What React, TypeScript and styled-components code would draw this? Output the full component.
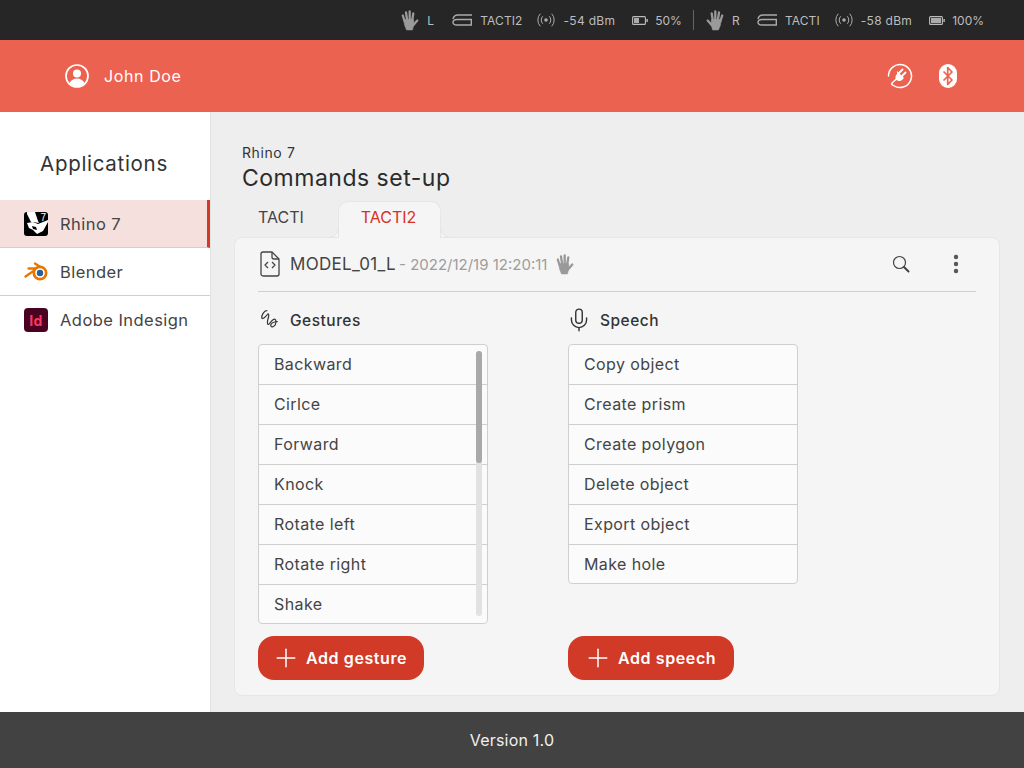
import styled, { createGlobalStyle } from 'styled-components';
import { EllipsisVertical, Mic, Plus } from 'lucide-react';

const gestures = ['Backward', 'Cirlce', 'Forward', 'Knock', 'Rotate left', 'Rotate right', 'Shake'];
const speech = ['Copy object', 'Create prism', 'Create polygon', 'Delete object', 'Export object', 'Make hole'];

const GlobalStyle = createGlobalStyle`
    html, body {
        margin: 0;
        padding: 0;
    }

    body {
        font-family: Inter, "Open Sans", "Liberation Sans", sans-serif;
        color: #333;
    }

    * {
        box-sizing: border-box;
    }
`;

function HandIcon({ color, mirrored }: { color: string; mirrored?: boolean }) {
    return (
        <svg width="18" height="21" viewBox="0 0 18 21" fill={color} stroke={color} style={mirrored ? { transform: 'scaleX(-1)' } : undefined}>
            <path d="M3 9.500h9.500l.5 4-1.500 6.500H5.500L3.500 15z" strokeWidth="0.500" />
            <path d="M3.800 12L1.800 5.500M6.200 10.500L5 2.500M8.700 10.500V1.500M11.200 10.500L12.300 3.500" strokeWidth="2.300" strokeLinecap="round" fill="none" />
            <path d="M12 15.500L16.300 10.500" strokeWidth="2.300" strokeLinecap="round" fill="none" />
        </svg>
    );
}

function DeviceIcon() {
    return (
        <svg width="20" height="12" viewBox="0 0 20 12" fill="none" stroke="#aaa" strokeWidth="1.400">
            <path d="M1 5C1.500 2.500 3.500 1 6 1h14" />
            <path d="M19.300 5.500H5C2.500 5.500 1 6.800 1 8.300S2.500 11 5 11h14.300z" />
        </svg>
    );
}

function SignalIcon() {
    return (
        <svg width="18" height="14" viewBox="0 0 18 14" fill="none" stroke="#aaa" strokeWidth="1" strokeLinecap="round">
            <circle cx="9" cy="7" r="1.800" fill="#aaa" stroke="none" />
            <path d="M5.500 3.500a5 5 0 0 0 0 7M12.500 3.500a5 5 0 0 1 0 7" />
            <path d="M3 1a9 9 0 0 0 0 12M15 1a9 9 0 0 1 0 12" />
        </svg>
    );
}

function BatteryIcon({ level }: { level: number }) {
    return (
        <svg width="16" height="9" viewBox="0 0 16 9" fill="none">
            <rect x="0.600" y="0.600" width="12.800" height="7.800" rx="1" stroke="#bbb" strokeWidth="1.100" />
            <rect x="2" y="2" width={10 * level} height="5" fill="#aaa" />
            <rect x="14.400" y="3" width="1.400" height="3" fill="#bbb" />
        </svg>
    );
}

function PlugIcon() {
    return (
        <svg width="26" height="26" viewBox="0 0 26 26" fill="none" stroke="#fff">
            <path d="M10 15.500L5.500 19.500C4 21 5 22 6.500 22.500A11.500 11.500 0 1 0 1.500 13" strokeWidth="1.500" strokeLinecap="round" />
            <path d="M10 8l7 7-1.500 1.500c-2 2-4.500 2-6 .5s-1.500-4 .5-6z" fill="#fff" stroke="none" />
            <path d="M12 10l3.500-3.500M15 13l3.500-3.500" strokeWidth="1.800" strokeLinecap="round" />
        </svg>
    );
}

function BluetoothIcon() {
    return (
        <svg width="18" height="24" viewBox="0 0 18 24" fill="none">
            <rect width="18" height="24" rx="9" fill="#fff" />
            <path d="M4.500 7.500L13 16l-4.300 4.500V3.500L13 8l-8.500 8.500" stroke="#ec6251" strokeWidth="1.700" strokeLinejoin="round" />
        </svg>
    );
}

function UserIcon() {
    return (
        <svg width="24" height="24" viewBox="0 0 24 24" fill="none">
            <circle cx="12" cy="12" r="11" stroke="#fff" strokeWidth="1.700" />
            <circle cx="12" cy="9.500" r="4" fill="#fff" />
            <path d="M4.500 19c1.500-3 4.500-4.500 7.500-4.500s6 1.500 7.500 4.500c-2 2.200-4.700 3.500-7.500 3.500S6.500 21.200 4.500 19z" fill="#fff" />
        </svg>
    );
}

function RhinoIcon() {
    return (
        <svg width="24" height="24" viewBox="0 0 24 24">
            <rect width="24" height="24" rx="3" fill="#000" />
            <path d="M3 0h8l3 9 1 2-6-1-2 0-4-8z" fill="#fff" />
            <path d="M3 11l6-1 5 2 10-4v2l-5 9-6 3-4-4-4-2z" fill="#fff" />
            <path d="M8 14l4 1 1 3-4-1z" fill="#000" />
            <text x="16.500" y="9" fontSize="10" fontFamily="Liberation Sans, sans-serif" fill="#fff">7</text>
        </svg>
    );
}

function BlenderIcon() {
    return (
        <svg width="24" height="20" viewBox="0 0 24 20" fill="none" stroke="#ea7600" strokeLinecap="round">
            <path d="M1.500 14.500L9.500 9M4.500 6.500H14M11 1.500L18 6" strokeWidth="2.300" />
            <circle cx="16" cy="11" r="6.200" fill="#fff" strokeWidth="2.700" />
            <circle cx="16" cy="11" r="3.200" fill="#24619c" stroke="none" />
        </svg>
    );
}

function FileCodeIcon() {
    return (
        <svg width="20" height="26" viewBox="0 0 20 26" fill="none" stroke="#444" strokeWidth="1.300" strokeLinejoin="round">
            <path d="M3 1h9l7 7v15a2 2 0 0 1-2 2H3a2 2 0 0 1-2-2V3a2 2 0 0 1 2-2z" />
            <path d="M12 1v5a2 2 0 0 0 2 2h5" />
            <path d="M8 11l-3 3 3 3M12 11l3 3-3 3" />
        </svg>
    );
}

function SearchIcon() {
    return (
        <svg width="18" height="18" viewBox="0 0 18 18" fill="none" stroke="#444">
            <circle cx="7.500" cy="7.500" r="6" strokeWidth="1.200" />
            <path d="M12 12l4.500 4.500" strokeWidth="2" strokeLinecap="round" />
        </svg>
    );
}

function GestureIcon() {
    return (
        <svg width="22" height="22" viewBox="-2 0 20 20" fill="none" stroke="#333" strokeWidth="1.100" strokeLinecap="round">
            <path d="M6 1.500C3.500 1.500 1 6 1.500 8c.5 2 3.500-1 5-3 1-1.300 1.700.2 1 2.500-.8 2.700-1.500 5.500-.5 6.500 1 .8 3-3.500 5-4.500 1.500-.7 2.500.5 2.300 2.500-.3 3-2.300 4.700-4 4-1.600-.8-.5-3.500 2.700-4.200l2.500-.3" />
        </svg>
    );
}

interface DeviceStatusProps {
    mirrored?: boolean;
    label: string;
    device: string;
    signal: string;
    battery: string;
    level: number;
}

function DeviceStatus({ mirrored, label, device, signal, battery, level }: DeviceStatusProps) {
    return (
        <StatusGroup>
            <HandIcon color="#9a9a9a" mirrored={mirrored} />
            <StatusLabel>{label}</StatusLabel>
            <DeviceIcon />
            <DeviceName>{device}</DeviceName>
            <SignalIcon />
            <SignalText>{signal}</SignalText>
            <BatteryIcon level={level} />
            <BatteryText>{battery}</BatteryText>
        </StatusGroup>
    );
}

function ItemList({ items, scrollable }: { items: string[]; scrollable?: boolean }) {
    return (
        <ListBox>
            {items.map((item) => <ListRow key={item}>{item}</ListRow>)}
            {scrollable && (
                <ScrollTrack>
                    <ScrollThumb />
                </ScrollTrack>
            )}
        </ListBox>
    );
}

export default function App() {
    return (
        <Page>
            <GlobalStyle />
            <TopBar>
                <DeviceStatus label="L" device="TACTI2" signal="-54 dBm" battery="50%" level={0.5} />
                <Divider />
                <DeviceStatus mirrored label="R" device="TACTI" signal="-58 dBm" battery="100%" level={1} />
            </TopBar>
            <Header>
                <UserBlock>
                    <UserIcon />
                    <UserName>John Doe</UserName>
                </UserBlock>
                <HeaderIcons>
                    <PlugIcon />
                    <BluetoothIcon />
                </HeaderIcons>
            </Header>
            <Body>
                <Sidebar>
                    <SidebarTitle>Applications</SidebarTitle>
                    <AppRow $active>
                        <AppIcon><RhinoIcon /></AppIcon>
                        Rhino 7
                    </AppRow>
                    <AppRow>
                        <AppIcon><BlenderIcon /></AppIcon>
                        Blender
                    </AppRow>
                    <AppRow $plain>
                        <AppIcon><IndesignIcon>Id</IndesignIcon></AppIcon>
                        Adobe Indesign
                    </AppRow>
                </Sidebar>
                <Main>
                    <Crumb>Rhino 7</Crumb>
                    <Title>Commands set-up</Title>
                    <Tabs>
                        <Tab>TACTI</Tab>
                        <ActiveTab>TACTI2</ActiveTab>
                    </Tabs>
                    <Card>
                        <CardHeader>
                            <FileCodeIcon />
                            <FileName>MODEL_01_L</FileName>
                            <FileDate>- 2022/12/19 12:20:11</FileDate>
                            <HandIcon color="#999" />
                            <CardActions>
                                <SearchIcon />
                                <EllipsisVertical size={24} color="#555" strokeWidth={2.4} />
                            </CardActions>
                        </CardHeader>
                        <Columns>
                            <Column>
                                <ColumnTitle>
                                    <TitleIcon><GestureIcon /></TitleIcon>
                                    Gestures
                                </ColumnTitle>
                                <ItemList items={gestures} scrollable />
                                <AddButton $inset={13}>
                                    <Plus size={30} strokeWidth={1.2} />
                                    Add gesture
                                </AddButton>
                            </Column>
                            <Column>
                                <ColumnTitle>
                                    <TitleIcon><Mic size={26} strokeWidth={1.3} color="#333" /></TitleIcon>
                                    Speech
                                </ColumnTitle>
                                <ItemList items={speech} />
                                <ButtonSlot>
                                    <AddButton $inset={15}>
                                        <Plus size={30} strokeWidth={1.2} />
                                        Add speech
                                    </AddButton>
                                </ButtonSlot>
                            </Column>
                        </Columns>
                    </Card>
                </Main>
            </Body>
            <Footer>Version 1.0</Footer>
        </Page>
    );
}

const Page = styled.div`
    display: flex;
    flex-direction: column;
    width: 1024px;
    height: 768px;
    overflow: hidden;
`;

const TopBar = styled.div`
    display: flex;
    align-items: center;
    justify-content: flex-end;
    flex: 0 0 40px;
    padding-right: 40px;
    background: #262626;
    color: #bdbdbd;
`;

const StatusGroup = styled.div`
    display: flex;
    align-items: center;
`;

const StatusText = styled.span`
    font-size: 12px;
`;

const StatusLabel = styled(StatusText)`
    width: 25px;
    margin-left: 8px;
`;

const DeviceName = styled(StatusText)`
    margin: 0 15px 0 8px;
    letter-spacing: 0.1px;
`;

const SignalText = styled(StatusText)`
    margin: 0 17px 0 8px;
    letter-spacing: 0.3px;
`;

const BatteryText = styled(StatusText)`
    margin-left: 7px;
`;

const Divider = styled.div`
    width: 1px;
    height: 20px;
    margin: 0 12px 0 11px;
    background: #666;
`;

const Header = styled.header`
    display: flex;
    align-items: center;
    justify-content: space-between;
    flex: 0 0 72px;
    padding: 0 67px 0 65px;
    background: #ec6251;
`;

const UserBlock = styled.div`
    display: flex;
    align-items: center;
    gap: 15px;
`;

const UserName = styled.span`
    font-size: 16px;
    letter-spacing: 0.6px;
    color: #fff;
`;

const HeaderIcons = styled.div`
    display: flex;
    align-items: center;
    gap: 26px;
`;

const Body = styled.div`
    display: flex;
    flex: 1;
    min-height: 0;
`;

const Sidebar = styled.aside`
    flex: 0 0 211px;
    padding-top: 40px;
    background: #fff;
    border-right: 1px solid #e2e2e2;
`;

const SidebarTitle = styled.h2`
    margin: 0 0 24px;
    padding-right: 2px;
    text-align: center;
    font-size: 20.500px;
    font-weight: 400;
    line-height: 24px;
    letter-spacing: 0.7px;
    color: #333;
`;

const AppRow = styled.div<{ $active?: boolean; $plain?: boolean }>`
    display: flex;
    align-items: center;
    gap: 12px;
    height: 48px;
    padding-left: 24px;
    font-size: 16.500px;
    letter-spacing: 0.45px;
    color: #444;
    background: ${({ $active }) => ($active ? '#f5e0de' : 'transparent')};
    border-bottom: ${({ $plain }) => ($plain ? 'none' : '1px solid #cfcfcf')};
    border-right: ${({ $active }) => ($active ? '3px solid #d13a27' : 'none')};
`;

const AppIcon = styled.span`
    display: flex;
    align-items: center;
    justify-content: center;
    width: 24px;
    height: 24px;
`;

const IndesignIcon = styled.span`
    display: flex;
    align-items: center;
    justify-content: center;
    width: 24px;
    height: 24px;
    border-radius: 4px;
    background: #49021f;
    color: #ff3366;
    font-size: 14px;
    font-weight: 700;
`;

const Main = styled.main`
    display: flex;
    flex: 1;
    flex-direction: column;
    padding: 32px 24px 16px 23px;
    background: #eeeeee;
`;

const Crumb = styled.div`
    margin-left: 8px;
    font-size: 14px;
    line-height: 17px;
    letter-spacing: 0.6px;
    color: #333;
`;

const Title = styled.h1`
    margin: 3px 0 9px 8px;
    font-size: 23px;
    font-weight: 400;
    line-height: 28px;
    letter-spacing: 0.5px;
    color: #2b2b2b;
`;

const Tabs = styled.div`
    display: flex;
    height: 36px;
    padding-left: 24px;
`;

const Tab = styled.div`
    display: flex;
    align-items: center;
    width: 80px;
    height: 37px;
    padding-bottom: 6px;
    font-size: 16px;
    color: #444;
`;

const ActiveTab = styled(Tab)`
    position: relative;
    z-index: 1;
    justify-content: center;
    width: 103px;
    padding-right: 2px;
    color: #d9301f;
    background: #f5f5f5;
    border: 1px solid #e6e6e6;
    border-bottom: none;
    border-radius: 10px 10px 0 0;

    &::before,
    &::after {
        content: '';
        position: absolute;
        bottom: 1px;
        width: 8px;
        height: 8px;
    }

    &::before {
        left: -9px;
        background: radial-gradient(circle at 0 0, transparent 7.500px, #e6e6e6 7.500px, #e6e6e6 8.500px, #f5f5f5 8.500px);
    }

    &::after {
        right: -9px;
        background: radial-gradient(circle at 100% 0, transparent 7.500px, #e6e6e6 7.500px, #e6e6e6 8.500px, #f5f5f5 8.500px);
    }
`;

const Card = styled.section`
    flex: 1;
    padding: 0 23px;
    background: #f5f5f5;
    border: 1px solid #e6e6e6;
    border-radius: 8px;
`;

const CardHeader = styled.div`
    display: flex;
    align-items: center;
    height: 54px;
    padding: 0 0 1px 2px;
    border-bottom: 1px solid #cfcfcf;
`;

const FileName = styled.span`
    margin-left: 10px;
    font-size: 17px;
    letter-spacing: 0.3px;
    color: #444;
`;

const FileDate = styled.span`
    margin: 0 9px 0 3px;
    font-size: 15px;
    color: #9d9d9d;
`;

const CardActions = styled.div`
    display: flex;
    align-items: center;
    gap: 34px;
    margin-left: auto;
    margin-right: 8px;
`;

const Columns = styled.div`
    display: flex;
    gap: 80px;
    padding-top: 16px;
`;

const Column = styled.div`
    width: 230px;
`;

const ColumnTitle = styled.div`
    display: flex;
    align-items: center;
    gap: 10px;
    height: 24px;
    margin-bottom: 12px;
    font-size: 15.500px;
    font-weight: 500;
    letter-spacing: 0.5px;
    color: #333;
`;

const TitleIcon = styled.span`
    display: flex;
    justify-content: center;
    width: 22px;

    svg {
        flex-shrink: 0;
    }
`;

const ListBox = styled.div`
    position: relative;
    overflow: hidden;
    background: #fbfbfb;
    border: 1px solid #cfcfcf;
    border-radius: 4px;
`;

const ListRow = styled.div`
    display: flex;
    align-items: center;
    height: 40px;
    padding: 0 0 1px 15px;
    font-size: 16px;
    letter-spacing: 0.4px;
    color: #444;
    border-top: 1px solid #cfcfcf;

    &:first-child {
        height: 39px;
        border-top: none;
    }

    &:last-of-type {
        height: 39px;
    }
`;

const ScrollTrack = styled.span`
    position: absolute;
    top: 6px;
    right: 5px;
    bottom: 7px;
    width: 6px;
    border-radius: 3px;
    background: #e2e2e2;
`;

const ScrollThumb = styled.span`
    display: block;
    width: 100%;
    height: 112px;
    border-radius: 3px;
    background: #a9a9a9;
`;

const ButtonSlot = styled.div`
    margin-top: 52px;
`;

const AddButton = styled.button<{ $inset: number }>`
    display: flex;
    align-items: center;
    gap: 5px;
    width: 166px;
    height: 44px;
    margin-top: 12px;
    padding: 0 0 0 ${({ $inset }) => $inset}px;
    border: none;
    border-radius: 16px;
    background: #d13a27;
    color: #fff;
    font-family: inherit;
    font-size: 16px;
    font-weight: 600;
    letter-spacing: 0.6px;

    ${ButtonSlot} & {
        margin-top: 0;
    }
`;

const Footer = styled.footer`
    display: flex;
    align-items: center;
    justify-content: center;
    flex: 0 0 56px;
    background: #424242;
    color: #f0f0f0;
    font-size: 16px;
    letter-spacing: 0.2px;
`;
